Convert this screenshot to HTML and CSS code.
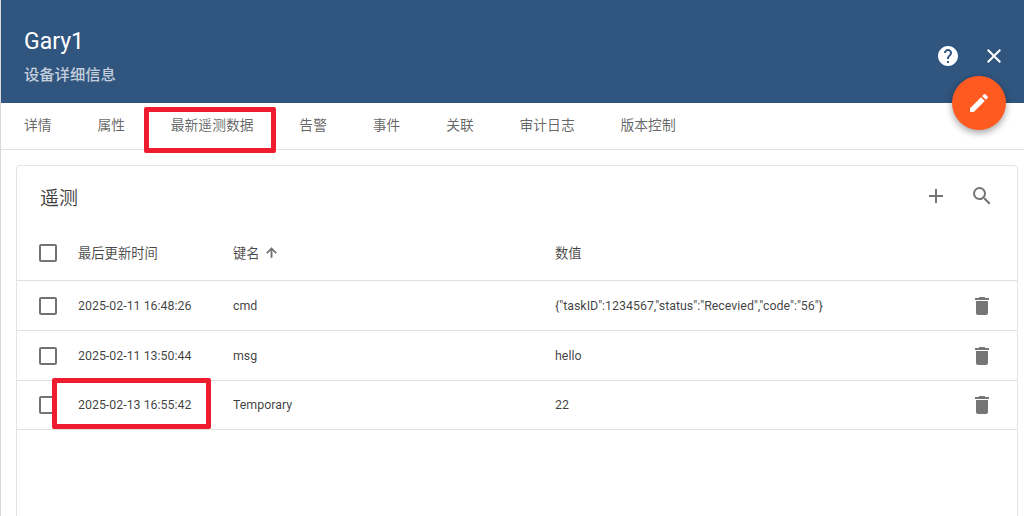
FILE: index.html
```html
<!DOCTYPE html>
<html lang="zh">
<head>
<meta charset="utf-8">
<title>Gary1</title>
<link rel="stylesheet" href="styles.css">
</head>
<body>
<div class="page">
  <header class="head">
    <div class="head-text">
      <h1 class="title">Gary1</h1>
      <div class="subtitle">设备详细信息</div>
    </div>
    <div class="head-actions">
      <svg class="icon-help" viewBox="0 0 24 24"><path fill="#fff" d="M12 2C6.48 2 2 6.48 2 12s4.48 10 10 10 10-4.48 10-10S17.52 2 12 2zm1 17h-2v-2h2v2zm2.07-7.75l-.9.92C13.45 12.9 13 13.5 13 15h-2v-.5c0-1.1.45-2.1 1.17-2.83l1.24-1.26c.37-.36.59-.86.59-1.41 0-1.1-.9-2-2-2s-2 .9-2 2H8c0-2.21 1.79-4 4-4s4 1.79 4 4c0 .88-.36 1.68-.93 2.25z"/></svg>
      <svg class="icon-close" viewBox="0 0 24 24"><path fill="#fff" d="M19 6.41L17.59 5 12 10.59 6.41 5 5 6.41 10.59 12 5 17.59 6.41 19 12 13.41 17.59 19 19 17.59 13.41 12z"/></svg>
    </div>
  </header>
  <button class="fab" type="button" aria-label="edit"><svg viewBox="0 0 24 24"><path fill="#fff" d="M3 17.25V21h3.75L17.81 9.94l-3.75-3.75L3 17.25zM20.71 7.04a1 1 0 0 0 0-1.41l-2.34-2.34a1 1 0 0 0-1.41 0l-1.83 1.83 3.75 3.75 1.83-1.83z"/></svg></button>
  <nav class="tabs">
    <span class="tab">详情</span>
    <span class="tab">属性</span>
    <span class="tab">最新遥测数据</span>
    <span class="tab">告警</span>
    <span class="tab">事件</span>
    <span class="tab">关联</span>
    <span class="tab">审计日志</span>
    <span class="tab">版本控制</span>
  </nav>
  <main class="content">
    <section class="card">
      <div class="card-head">
        <h2 class="card-title">遥测</h2>
        <div class="card-actions">
          <svg class="tool" viewBox="0 0 24 24"><path d="M19 13h-6v6h-2v-6H5v-2h6V5h2v6h6v2z"/></svg>
          <svg class="tool" viewBox="0 0 24 24"><path d="M15.5 14h-.79l-.28-.27A6.47 6.47 0 0 0 16 9.5 6.5 6.5 0 1 0 9.5 16c1.61 0 3.09-.59 4.23-1.57l.27.28v.79l5 4.99L20.49 19l-4.99-5zm-6 0C7.01 14 5 11.99 5 9.5S7.01 5 9.5 5 14 7.01 14 9.5 11.99 14 9.5 14z"/></svg>
        </div>
      </div>
      <div class="row row-head">
        <span class="check"></span>
        <span>最后更新时间</span>
        <span class="key-head">键名<svg class="sort" viewBox="0 0 24 24"><path d="M4 12l1.41 1.41L11 7.83V20h2V7.83l5.58 5.59L20 12l-8-8-8 8z"/></svg></span>
        <span>数值</span>
        <span></span>
      </div>
      <div class="row">
        <span class="check"></span>
        <span>2025-02-11 16:48:26</span>
        <span>cmd</span>
        <span>{"taskID":1234567,"status":"Recevied","code":"56"}</span>
        <svg class="trash" viewBox="0 0 24 24"><path d="M6 19c0 1.1.9 2 2 2h8c1.1 0 2-.9 2-2V7H6v12zM19 4h-3.5l-1-1h-5l-1 1H5v2h14V4z"/></svg>
      </div>
      <div class="row">
        <span class="check"></span>
        <span>2025-02-11 13:50:44</span>
        <span>msg</span>
        <span>hello</span>
        <svg class="trash" viewBox="0 0 24 24"><path d="M6 19c0 1.1.9 2 2 2h8c1.1 0 2-.9 2-2V7H6v12zM19 4h-3.5l-1-1h-5l-1 1H5v2h14V4z"/></svg>
      </div>
      <div class="row row-last">
        <span class="check"></span>
        <span>2025-02-13 16:55:42</span>
        <span>Temporary</span>
        <span>22</span>
        <svg class="trash" viewBox="0 0 24 24"><path d="M6 19c0 1.1.9 2 2 2h8c1.1 0 2-.9 2-2V7H6v12zM19 4h-3.5l-1-1h-5l-1 1H5v2h14V4z"/></svg>
      </div>
    </section>
  </main>
  <div class="mark mark-tab"></div>
  <div class="mark mark-time"></div>
</div>
</body>
</html>
```

FILE: styles.css
```css
* { box-sizing: border-box; }
html, body { margin: 0; height: 100%; overflow: hidden; background: #fff; }
body { font-family: Roboto, "Noto Sans CJK SC", sans-serif; color: rgba(0,0,0,.76); }
.page { position: relative; width: 1024px; height: 516px; overflow: hidden; border-left: 1px solid #d9d9d9; }
.head { height: 103px; background: #30557f; color: #fff; display: flex; justify-content: space-between; margin-left: -1px; padding: 25px 18px 0 24px; }
.title { margin: 0; font-size: 23px; font-weight: 400; line-height: 34px; }
.subtitle { margin-top: 6px; font-size: 15.3px; line-height: 20px; color: rgba(255,255,255,.72); font-weight: 500; }
.head-actions { display: flex; gap: 22px; padding-top: 19px; height: 44px; }
.icon-help, .icon-close { width: 24px; height: 24px; }
.fab { position: absolute; left: 951px; top: 76px; width: 54px; height: 54px; padding: 15px; border: 0; border-radius: 50%; background: #ff5a1f; box-shadow: 0 3px 6px rgba(0,0,0,.25), 0 3px 8px rgba(0,0,0,.12); }
.fab svg { display: block; width: 24px; height: 24px; }
.tabs { height: 47px; border-bottom: 1px solid #e0e0e0; display: flex; align-items: center; gap: 45.8px; padding: 0 0 5px 23px; font-size: 13.8px; color: rgba(0,0,0,.62); }
.tab { display: block; white-space: nowrap; }
.content { padding: 15px 6px 0 15px; }
.card { border: 1px solid #e4e4e4; border-radius: 4px; height: 400px; box-shadow: 0 0 1px rgba(0,0,0,.05); }
.card-head { display: flex; justify-content: space-between; align-items: center; height: 62px; padding: 0 23px 2px 23px; }
.card-title { margin: 0; font-size: 19px; font-weight: 400; color: rgba(0,0,0,.76); }
.card-actions { display: flex; gap: 22px; }
.tool { width: 24px; height: 24px; display: block; fill: #757575; }
.row { display: grid; grid-template-columns: 39px 155px 322px 1fr 24px; align-items: center; height: 50px; padding: 0 23px 0 22px; font-size: 12.4px; border-bottom: 1px solid #e0e0e0; color: rgba(0,0,0,.76); }
.row-head { height: 53px; font-size: 13.3px; padding-bottom: 3px; color: rgba(0,0,0,.72); }
.row-last { height: 49px; padding-bottom: 1px; }
.check { width: 18px; height: 18px; border: 2px solid #737373; border-radius: 2px; display: block; }
.key-head { display: flex; align-items: center; gap: 4px; }
.sort { width: 15px; height: 15px; fill: #757575; stroke: #757575; stroke-width: 1; }
.trash { width: 24px; height: 24px; fill: #757575; display: block; }
.mark { position: absolute; border: 5px solid #ee1c2e; border-radius: 2px; }
.mark-tab { left: 143px; top: 107px; width: 132px; height: 46px; }
.mark-time { left: 51px; top: 378px; width: 159px; height: 51px; }
```
